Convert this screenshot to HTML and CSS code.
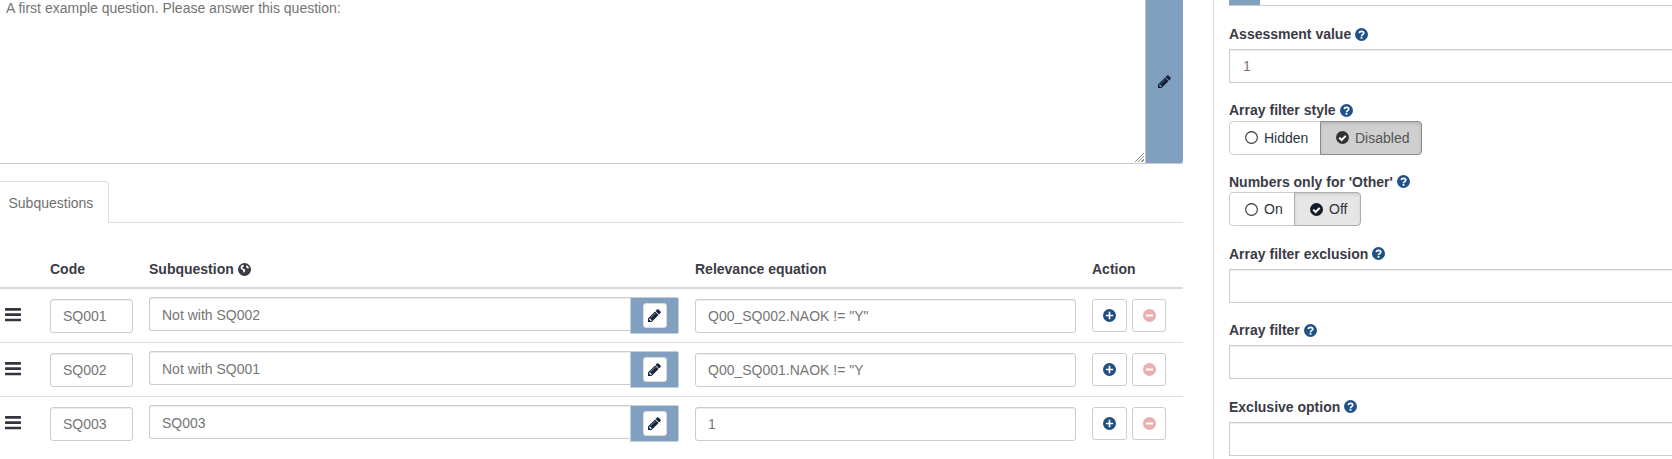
FILE: index.html
```html
<!DOCTYPE html>
<html lang="en">
<head>
<meta charset="utf-8">
<title>Question editor</title>
<link rel="stylesheet" href="styles.css">
</head>
<body>
<svg class="defs" aria-hidden="true">
  <symbol id="i-pencil" viewBox="128 128 1536 1536"><path fill="currentColor" d="M491 1536l91-91-235-235-91 91v107h128v128h107zm523-928q0-22-22-22-10 0-17 7l-542 542q-7 7-7 17 0 22 22 22 10 0 17-7l542-542q7-7 7-17zm-54-192l416 416-832 832h-416v-416zm683 96q0 53-37 90l-166 166-416-416 166-165q36-38 90-38 53 0 91 38l235 234q37 39 37 91z"/></symbol>
  <symbol id="i-bars" viewBox="128 320 1536 1216"><path fill="currentColor" d="M1664 1344v128q0 26-19 45t-45 19h-1408q-26 0-45-19t-19-45v-128q0-26 19-45t45-19h1408q26 0 45 19t19 45zm0-512v128q0 26-19 45t-45 19h-1408q-26 0-45-19t-19-45v-128q0-26 19-45t45-19h1408q26 0 45 19t19 45zm0-512v128q0 26-19 45t-45 19h-1408q-26 0-45-19t-19-45v-128q0-26 19-45t45-19h1408q26 0 45 19t19 45z"/></symbol>
  <symbol id="i-plus" viewBox="0 0 16 16"><circle cx="8" cy="8" r="8" fill="currentColor"/><path fill="#fff" d="M7 3.500h2v3.500h3.500v2h-3.500v3.500h-2v-3.500h-3.500v-2h3.500z"/></symbol>
  <symbol id="i-minus" viewBox="0 0 16 16"><circle cx="8" cy="8" r="8" fill="currentColor"/><rect x="3.500" y="6.800" width="9" height="2.400" fill="#fff"/></symbol>
  <symbol id="i-help" viewBox="0 0 16 16"><circle cx="8" cy="8" r="8" fill="currentColor"/><path fill="none" stroke="#fff" stroke-width="2" d="M5.200 6.300c.2-1.500 1.300-2.200 2.800-2.200 1.600 0 2.800.8 2.800 2.100 0 1.900-2.800 1.900-2.800 3.800"/><rect x="6.900" y="11" width="2.200" height="2.200" fill="#fff"/></symbol>
  <symbol id="i-check" viewBox="0 0 16 16"><circle cx="8" cy="8" r="8" fill="currentColor"/><path fill="none" stroke="#fff" stroke-width="2.400" d="M4 8.200l2.900 2.900 5.100-5.100"/></symbol>
  <symbol id="i-radio" viewBox="0 0 16 16"><circle cx="8" cy="8" r="7.200" fill="none" stroke="currentColor" stroke-width="1.400"/></symbol>
  <symbol id="i-globe" viewBox="0 0 16 16"><circle cx="8" cy="8" r="8" fill="currentColor"/><path fill="#fff" d="M3.200 4.500c.9-1.200 2-1.900 3.400-2.200l.9 1.300-1.300 1-1 1.100 1.100 1.400 2.200.7.400 1.600-1.200 2.400-1.100-.2-.6-2.800-2.500-1.600zM10.800 2.800c1.400.7 2.400 2 2.800 3.400l-1.200.7-1.600-.7-.9-1.700z"/></symbol>
</svg>
<div class="page">
  <main class="main">
    <div class="editor">
      <textarea class="editor-text" aria-label="Question text">A first example question. Please answer this question:</textarea>
      <span class="grip"></span>
      <div class="editor-side"><svg class="ico-pencil"><use href="#i-pencil"/></svg></div>
    </div>
    <div class="tabs"><div class="tab">Subquestions</div></div>
    <div class="grid head">
      <div></div>
      <div>Code</div>
      <div class="head-sub">Subquestion <svg class="ico-globe"><use href="#i-globe"/></svg></div>
      <div>Relevance equation</div>
      <div>Action</div>
    </div>

    <div class="grid row">
      <svg class="ico-bars"><use href="#i-bars"/></svg>
      <input class="input code" value="SQ001" aria-label="Code">
      <div class="group"><input class="input sub" value="Not with SQ002" aria-label="Subquestion"><div class="addon"><span class="edit"><svg class="ico-pencil"><use href="#i-pencil"/></svg></span></div></div>
      <input class="input rel" value="Q00_SQ002.NAOK != &quot;Y&quot;" aria-label="Relevance equation">
      <div class="actions"><span class="act"><svg class="ico-act plus"><use href="#i-plus"/></svg></span><span class="act act-minus"><svg class="ico-act minus"><use href="#i-minus"/></svg></span></div>
    </div>
    <div class="grid row">
      <svg class="ico-bars"><use href="#i-bars"/></svg>
      <input class="input code" value="SQ002" aria-label="Code">
      <div class="group"><input class="input sub" value="Not with SQ001" aria-label="Subquestion"><div class="addon"><span class="edit"><svg class="ico-pencil"><use href="#i-pencil"/></svg></span></div></div>
      <input class="input rel" value="Q00_SQ001.NAOK != &quot;Y" aria-label="Relevance equation">
      <div class="actions"><span class="act"><svg class="ico-act plus"><use href="#i-plus"/></svg></span><span class="act act-minus"><svg class="ico-act minus"><use href="#i-minus"/></svg></span></div>
    </div>
    <div class="grid row">
      <svg class="ico-bars"><use href="#i-bars"/></svg>
      <input class="input code" value="SQ003" aria-label="Code">
      <div class="group"><input class="input sub" value="SQ003" aria-label="Subquestion"><div class="addon"><span class="edit"><svg class="ico-pencil"><use href="#i-pencil"/></svg></span></div></div>
      <input class="input rel" value="1" aria-label="Relevance equation">
      <div class="actions"><span class="act"><svg class="ico-act plus"><use href="#i-plus"/></svg></span><span class="act act-minus"><svg class="ico-act minus"><use href="#i-minus"/></svg></span></div>
    </div>
  </main>

  <aside class="side">
    <div class="side-top"><span class="side-top-addon"></span></div>
    <div class="field">
      <div class="label">Assessment value <svg class="ico-help"><use href="#i-help"/></svg></div>
      <input class="input wide" value="1" aria-label="Assessment value">
    </div>
    <div class="field field-seg">
      <div class="label">Array filter style <svg class="ico-help"><use href="#i-help"/></svg></div>
      <div class="seg">
        <span class="seg-btn seg-hidden"><svg class="ico-opt"><use href="#i-radio"/></svg>Hidden</span>
        <span class="seg-btn seg-disabled"><svg class="ico-opt"><use href="#i-check"/></svg>Disabled</span>
      </div>
    </div>
    <div class="field field-seg">
      <div class="label">Numbers only for 'Other' <svg class="ico-help"><use href="#i-help"/></svg></div>
      <div class="seg">
        <span class="seg-btn seg-on"><svg class="ico-opt"><use href="#i-radio"/></svg>On</span>
        <span class="seg-btn seg-off"><svg class="ico-opt"><use href="#i-check"/></svg>Off</span>
      </div>
    </div>
    <div class="field">
      <div class="label">Array filter exclusion <svg class="ico-help"><use href="#i-help"/></svg></div>
      <input class="input wide" aria-label="Array filter exclusion">
    </div>
    <div class="field">
      <div class="label">Array filter <svg class="ico-help"><use href="#i-help"/></svg></div>
      <input class="input wide" aria-label="Array filter">
    </div>
    <div class="field">
      <div class="label">Exclusive option <svg class="ico-help"><use href="#i-help"/></svg></div>
      <input class="input wide" aria-label="Exclusive option">
    </div>
  </aside>
</div>
</body>
</html>
```

FILE: styles.css
```css
* { box-sizing: border-box; }
html, body { margin: 0; padding: 0; height: 100%; overflow: hidden; background: #fff; }
body { font-family: "Liberation Sans", Arial, sans-serif; font-size: 14px; line-height: 20px; color: #3b3b46; }
.defs { width: 0; height: 0; position: absolute; }

.page { display: flex; height: 459px; width: 1672px; overflow: hidden; }
.main { width: 1183px; flex: none; }

.editor { display: flex; height: 164px; border-bottom: 1px solid #c8c8c8; position: relative; }
.editor-text { width: 1145px; height: 163px; flex: none; border: 0; outline: 0; margin: 0; padding: 0 0 0 6px; font: 14px/16px "Liberation Sans", Arial, sans-serif; color: #737373; resize: none; background: #fff; }
.grip { position: absolute; left: 1134px; top: 152px; width: 10px; height: 10px; background: repeating-linear-gradient(135deg, #8a8a8a 0 1px, #fff 1px 2.400px); clip-path: polygon(100% 0, 100% 100%, 0 100%); }
.editor-side { flex: 1; background: #819fbe; border-left: 1px solid #c4c4c4; border-radius: 0 0 2px 0; display: flex; align-items: center; justify-content: center; color: #14233a; }
.ico-pencil { width: 13px; height: 13px; display: block; }

.tabs { height: 59px; padding-top: 17px; border-bottom: 1px solid #ddd; }
.tab { width: 109px; height: 42px; padding: 11px 0 0 8.500px; background: #fff; border: 1px solid #ddd; border-left: 0; border-bottom: 0; border-radius: 0 4px 0 0; color: #707070; }

.grid { display: grid; grid-template-columns: 50px 99px 546px 397px 91px; }
.head { height: 66px; padding-bottom: 8px; align-items: end; font-weight: 700; border-bottom: 2px solid #d9d9d9; }
.head-sub { display: flex; align-items: center; gap: 4px; }
.ico-globe { width: 13px; height: 13px; color: #3b3b46; }

.row { height: 54px; align-items: start; border-bottom: 1px solid #ddd; padding-top: 8px; }
.row:last-child { border-bottom: 0; }
.ico-bars { width: 16px; height: 14px; color: #33343f; margin: 10.500px 0 0 5px; display: block; }

.input { height: 34px; border: 1px solid #ccc; border-radius: 3px; padding: 0 12px; font: 14px "Liberation Sans", Arial, sans-serif; color: #767676; background: #fff; outline: 0; box-shadow: inset 0 1px 1px rgba(0,0,0,.075); display: block; }
.code { width: 83px; margin-top: 2px; }
.rel { width: 381px; margin-top: 2px; }
.group { display: flex; width: 530px; }
.sub { width: 481px; flex: none; border-radius: 3px 0 0 3px; border-right: 0; padding-top: 2px; }
.addon { width: 49px; height: 37px; background: #819fbe; border: 1px solid #c4cedb; border-radius: 0 2px 2px 0; display: flex; align-items: center; justify-content: center; }
.edit { width: 24px; height: 25px; background: #fff; border: 1px solid #ddd; border-radius: 3px; display: flex; align-items: center; justify-content: center; color: #14233a; }

.actions { display: flex; gap: 5px; margin-top: 2px; }
.act { width: 35px; height: 33px; border: 1px solid #ccc; border-radius: 3px; display: flex; align-items: center; justify-content: center; background: #fff; }
.act-minus { width: 34px; }
.ico-act { width: 13px; height: 13px; display: block; }
.plus { color: #1f4e80; }
.minus { color: #e9aeae; }

.side { flex: none; width: 640px; margin-left: 30px; border-left: 1px solid #ddd; padding-left: 15px; display: flex; flex-direction: column; }
.side-top { height: 6px; border-bottom: 1px solid #ccc; margin-bottom: 18px; width: 100%; }
.side-top-addon { display: block; width: 31px; height: 5px; background: #819fbe; }
.field { margin-bottom: 17.500px; }
.label { font-weight: 700; display: flex; align-items: center; gap: 4px; margin-bottom: 5px; height: 20px; }
.field-seg .label { height: 19px; margin-bottom: 1px; }
.ico-help { width: 13px; height: 13px; color: #1f5288; }
.wide { width: 100%; border-radius: 0; padding-left: 13px; }

.seg { display: flex; height: 34px; }
.seg-btn { display: flex; align-items: center; height: 34px; border: 1px solid #ccc; color: #2e3440; padding-left: 15px; background: #fff; }
.ico-opt { width: 13px; height: 13px; margin-right: 6px; flex: none; }
.seg-hidden { width: 92px; border-radius: 4px 0 0 4px; }
.seg-disabled { width: 102px; margin-left: -1px; border-color: #8c8c8c; border-radius: 0 4px 4px 0; background: #cfcfcf; color: #555; box-shadow: inset 0 2px 3px rgba(0,0,0,.1); }
.seg-disabled .ico-opt { color: #333; }
.seg-on { width: 66px; border-radius: 4px 0 0 4px; }
.seg-off { width: 67px; margin-left: -1px; border-color: #adadad; border-radius: 0 4px 4px 0; background: #e6e6e6; box-shadow: inset 0 2px 3px rgba(0,0,0,.1); }
.seg-off .ico-opt { color: #141c2b; }
```
